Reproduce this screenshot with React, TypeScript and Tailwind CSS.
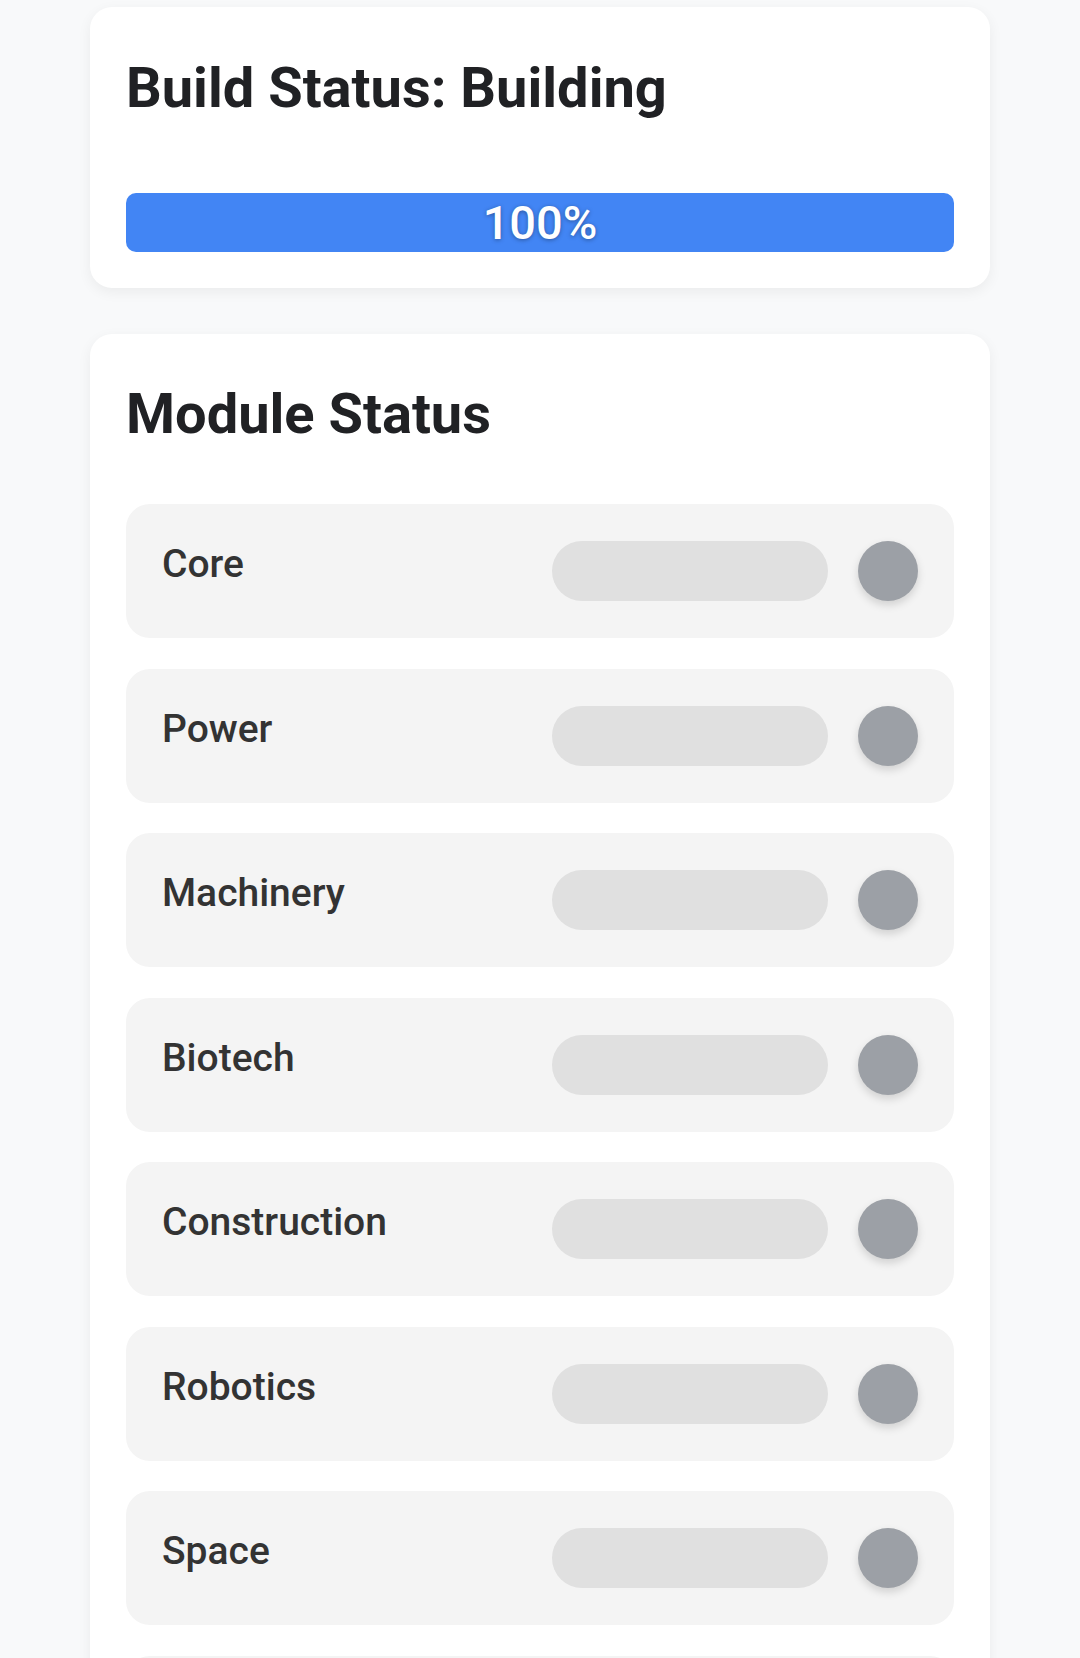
import React from "react";

const modules = ["Core", "Power", "Machinery", "Biotech", "Construction", "Robotics", "Space", ""];

export default function App() {
  return (
    <div
      className="min-h-[1658px] bg-[#f8f9fa] px-[90px] pt-[7px] pb-[40px]"
      style={{ fontFamily: "Roboto, 'Noto Sans', sans-serif" }}
    >
      <div className="flex flex-col gap-[46px]">
        <div className="rounded-[22px] bg-white px-[36px] pt-[48px] pb-[36px] shadow-[0_4px_14px_rgba(0,0,0,0.06)]">
          <h1 className="m-0 text-[56px] leading-[66px] font-bold text-[#202124]">Build Status: Building</h1>
          <div className="mt-[72px] flex h-[59px] w-full items-center justify-center rounded-[10px] bg-[#4285f4]">
            <span className="text-[47px] leading-none font-medium text-white [text-shadow:0_1px_4px_rgba(0,0,0,0.35)]">100%</span>
          </div>
        </div>

        <div className="rounded-[22px] bg-white px-[36px] pt-[47px] pb-[40px] shadow-[0_4px_14px_rgba(0,0,0,0.06)]">
          <h2 className="m-0 text-[56px] leading-[66px] font-bold text-[#202124]">Module Status</h2>
          <div className="mt-[57px] flex flex-col gap-[30.5px]">
            {modules.map((m, i) => (
              <div
                key={i}
                className="flex h-[134px] items-center justify-between rounded-[24px] bg-[#f4f4f4] px-[36px]"
              >
                <span className="min-h-[44px] pb-[14px] text-[39px] leading-[44px] font-medium text-[#333333]">{m}</span>
                <div className="flex items-center gap-[30px]">
                  <div className="h-[60px] w-[276px] rounded-full bg-[#e0e0e0]" />
                  <div className="h-[60px] w-[60px] rounded-full bg-[#9ca0a6] shadow-[0_4px_8px_rgba(0,0,0,0.15)]" />
                </div>
              </div>
            ))}
          </div>
        </div>
      </div>
    </div>
  );
}
